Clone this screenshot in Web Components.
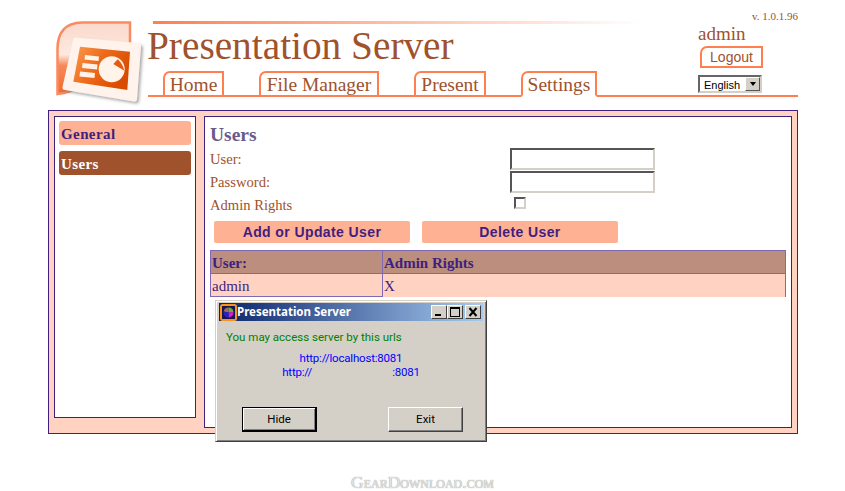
<!DOCTYPE html>
<html>
<head>
<meta charset="utf-8">
<title>Presentation Server</title>
<style>
html, body { margin: 0; padding: 0; background: #fff; overflow: hidden; }
body { font-family: "Liberation Serif", serif; color: #a0522d; height: 491px; position: relative; }
</style>
</head>
<body>

<ps-header user="admin" version="v. 1.0.1.96">
    <ps-tab style="width: 61px">Home</ps-tab>
    <ps-tab style="width: 120px">File Manager</ps-tab>
    <ps-tab style="width: 72px">Present</ps-tab>
    <ps-tab style="width: 76px" active>Settings</ps-tab>
</ps-header>

<ps-panel>
    <ps-nav-item slot="nav">General</ps-nav-item>
    <ps-nav-item slot="nav" active>Users</ps-nav-item>
    <ps-users></ps-users>
</ps-panel>

<ps-footer>GearDownload.com</ps-footer>

<ps-dialog title="Presentation Server"></ps-dialog>

<script>
class PsLogo extends HTMLElement {
    constructor() {
        super();
        this.attachShadow({ mode: 'open' });
        this.shadowRoot.innerHTML = /* html */`
        <style>
        :host { display: block; width: 92px; height: 88px; }
        svg { display: block; }
        </style>
        <svg width="92" height="88" viewBox="0 0 92 88">
            <defs>
                <linearGradient id="back" x1="0" y1="0" x2="0" y2="1">
                    <stop offset="0" stop-color="#fbd9cb"/>
                    <stop offset="0.45" stop-color="#fde9e0"/>
                    <stop offset="0.6" stop-color="#f58a58"/>
                    <stop offset="1" stop-color="#f26a2a"/>
                </linearGradient>
                <linearGradient id="slide" x1="0" y1="0" x2="1" y2="0.5">
                    <stop offset="0" stop-color="#fb9a4f"/>
                    <stop offset="0.5" stop-color="#ee6a1a"/>
                    <stop offset="1" stop-color="#d94c00"/>
                </linearGradient>
                <filter id="soft" x="-10%" y="-10%" width="125%" height="125%">
                    <feDropShadow dx="2" dy="2" stdDeviation="1.5" flood-color="#666" flood-opacity="0.55"/>
                </filter>
            </defs>
            <path d="M2.500 73 V28 Q2.500 2 27 1.500 H75 V52 L9 72 Z" fill="url(#back)" stroke="#fb8a60" stroke-width="2.500"/>
            <path d="M18 19 Q18 16 21 16.500 L83 22 Q86 22.500 86 25 L82 78 Q82 81 79 80.500 L10 69 Q7 68.500 7.500 66 Z" fill="#fff3ec" filter="url(#soft)"/>
            <path d="M25 25.700 L75 30.700 L72.300 69 L18.300 60.700 Z" fill="url(#slide)"/>
            <path d="M30 34 L44 35.500 L43.500 40 L29.500 38.500 Z M27.500 42 L42.500 43.500 L42 48.500 L27 47 Z M25 50.500 L40 52 L39.500 57 L24.500 55.500 Z" fill="#fff3ea"/>
            <circle cx="56.700" cy="48.300" r="13" fill="#fff3ea"/>
            <path d="M58.300 43 L62.700 38.300 Q68 43 69.300 49.700 Z" fill="#e85a10"/>
        </svg>`;
    }
}
customElements.define('ps-logo', PsLogo);

class PsTab extends HTMLElement {
    constructor() {
        super();
        this.attachShadow({ mode: 'open' });
        this.shadowRoot.innerHTML = /* html */`
        <style>
        :host {
            display: block;
            box-sizing: border-box;
            height: 26px;
            padding-top: 1px;
            border: 2px solid #ff7f50;
            border-top-left-radius: 7px;
            font-size: 19.500px;
            line-height: 21px;
            color: #a0522d;
            text-align: center;
            white-space: nowrap;
            background: #fff;
        }
        :host([active]) { border-bottom-color: #fff; }
        </style>
        <slot></slot>`;
    }
}
customElements.define('ps-tab', PsTab);

class PsSelect extends HTMLElement {
    constructor() {
        super();
        this.attachShadow({ mode: 'open' });
        this.shadowRoot.innerHTML = /* html */`
        <style>
        :host {
            display: flex;
            box-sizing: border-box;
            width: 64px;
            height: 18px;
            border: 2px solid;
            border-color: #666 #d4d0c8 #d4d0c8 #666;
            font: 11px "Liberation Sans", sans-serif;
            color: #000;
            background: #fff;
        }
        .value { flex: 1; padding-left: 4px; line-height: 16px; }
        .arrow {
            width: 15px;
            box-sizing: border-box;
            background: #d4d0c8;
            border: 1px solid;
            border-color: #fff #555 #555 #fff;
            display: flex;
            align-items: center;
            justify-content: center;
        }
        .arrow i { border: 3.500px solid transparent; border-top: 4px solid #000; border-bottom: 0; }
        </style>
        <span class="value">English</span>
        <span class="arrow"><i></i></span>`;
    }
}
customElements.define('ps-select', PsSelect);

class PsHeader extends HTMLElement {
    constructor() {
        super();
        this.attachShadow({ mode: 'open' });
        const user = this.getAttribute('user') || '';
        const version = this.getAttribute('version') || '';
        this.shadowRoot.innerHTML = /* html */`
        <style>
        :host {
            display: flex;
            box-sizing: border-box;
            width: 798px;
            height: 110px;
            padding: 21px 0 0 55px;
        }
        .main { margin-left: 1px; flex: 1; display: flex; flex-direction: column; }
        .top { display: flex; height: 50px; }
        .brand { flex: 1; }
        .rule {
            height: 3px;
            margin-left: 5px;
            width: 490px;
            background: linear-gradient(to right, #ff7f50, #fff);
        }
        h1 {
            margin: 0 0 0 -1px;
            font-weight: normal;
            font-size: 39.300px;
            line-height: 45px;
            color: #a0522d;
        }
        .account { width: 100px; margin-top: -11px; }
        .version { font-size: 11px; line-height: 13px; text-align: right; }
        .user { font-size: 19px; line-height: 20px; margin-top: 1px; }
        .logout {
            box-sizing: border-box;
            width: 63px;
            height: 22px;
            margin: 2px 0 0 2px;
            border: 2px solid #ff7f50;
            border-top-left-radius: 7px;
            font: 14px/18px "Liberation Sans", sans-serif;
            text-align: center;
        }
        .tabs {
            flex: 0 0 26px;
            display: flex;
            gap: 35px;
            box-sizing: border-box;
            height: 26px;
            padding-left: 15px;
            position: relative;
            background: linear-gradient(#ff7f50, #ff7f50) bottom / 100% 2px no-repeat;
        }
        ps-select { margin: 4px 36px 0 auto; }
        </style>
        <ps-logo></ps-logo>
        <div class="main">
            <div class="top">
                <div class="brand">
                    <div class="rule"></div>
                    <h1>Presentation Server</h1>
                </div>
                <div class="account">
                    <div class="version">${version}</div>
                    <div class="user">${user}</div>
                    <div class="logout">Logout</div>
                </div>
            </div>
            <div class="tabs">
                <slot></slot>
                <ps-select></ps-select>
            </div>
        </div>`;
    }
}
customElements.define('ps-header', PsHeader);

class PsNavItem extends HTMLElement {
    constructor() {
        super();
        this.attachShadow({ mode: 'open' });
        this.shadowRoot.innerHTML = /* html */`
        <style>
        :host {
            display: block;
            height: 24px;
            padding-left: 2px;
            border-radius: 3px;
            background: #ffb194;
            color: #3f1f7f;
            font-weight: bold;
            font-size: 15px;
            letter-spacing: 0.400px;
            line-height: 26px;
        }
        :host([active]) { background: #a0522d; color: #fff; }
        </style>
        <slot></slot>`;
    }
}
customElements.define('ps-nav-item', PsNavItem);

class PsPanel extends HTMLElement {
    constructor() {
        super();
        this.attachShadow({ mode: 'open' });
        this.shadowRoot.innerHTML = /* html */`
        <style>
        :host {
            display: flex;
            box-sizing: border-box;
            width: 750px;
            height: 324px;
            margin-left: 48px;
            padding: 5px;
            gap: 8px;
            background: #ffd2c2;
            border: 1px solid #3f1f7f;
        }
        nav {
            box-sizing: border-box;
            width: 142px;
            height: 302px;
            padding: 4px;
            display: flex;
            flex-direction: column;
            gap: 6px;
            background: #fff;
            border: 1px solid #3f1f7f;
        }
        main {
            flex: 1;
            box-sizing: border-box;
            padding: 5px;
            background: #fff;
            border: 1px solid #3f1f7f;
        }
        </style>
        <nav><slot name="nav"></slot></nav>
        <main><slot></slot></main>`;
    }
}
customElements.define('ps-panel', PsPanel);

class PsUsers extends HTMLElement {
    constructor() {
        super();
        this.attachShadow({ mode: 'open' });
        this.shadowRoot.innerHTML = /* html */`
        <style>
        :host { display: block; color: #a0522d; font-size: 14.600px; }
        h2 {
            margin: 0;
            height: 25px;
            font-size: 19.500px;
            line-height: 26px;
            color: #6a5a8c;
        }
        .form {
            display: grid;
            grid-template-columns: 300px 145px;
            grid-auto-rows: 23px;
            align-items: center;
            height: 69px;
        }
        label { padding-top: 2px; }
        input[type=text], input[type=password] {
            box-sizing: border-box;
            width: 145px;
            height: 22px;
            margin: 0;
            padding: 0;
            background: #fff;
            outline: 0;
            border: 2px solid;
            border-color: #555 #d4d0c8 #d4d0c8 #555;
        }
        .check {
            box-sizing: border-box;
            width: 12px;
            height: 12px;
            margin: -3px 0 0 4px;
            border: 2px solid;
            border-color: #555 #d4d0c8 #d4d0c8 #555;
        }
        .actions { display: flex; gap: 12px; padding: 5px 0 0 4px; height: 22px; }
        button {
            width: 196px;
            height: 22px;
            padding: 0;
            border: 0;
            border-radius: 2px;
            background: #ffb194;
            color: #3f1f7f;
            font: bold 14px "Liberation Sans", sans-serif;
            letter-spacing: 0.400px;
        }
        table {
            width: 576px;
            margin-top: 7px;
            border-collapse: separate;
            border-spacing: 0;
            table-layout: fixed;
            color: #3f1f7f;
        }
        th, td {
            box-sizing: border-box;
            height: 23px;
            padding: 2px 0 0 1px;
            text-align: left;
            font-size: 15px;
            border-left: 1px solid #7f68b4;
        }
        th {
            height: 24px;
            background: #bb8e7e;
            border-top: 1px solid #7f68b4;
            border-bottom: 1px solid #7f68b4;
        }
        td { background: #ffd2c2; font-weight: normal; }
        .first { width: 172px; }
        .last { border-right: 1px solid #7f68b4; }
        td.first { border-bottom: 1px solid #7f68b4; }
        </style>
        <h2>Users</h2>
        <div class="form">
            <label>User:</label><input type="text">
            <label>Password:</label><input type="password">
            <label>Admin Rights</label><div class="check"></div>
        </div>
        <div class="actions">
            <button>Add or Update User</button>
            <button>Delete User</button>
        </div>
        <table>
            <tr><th class="first">User:</th><th class="last">Admin Rights</th></tr>
            <tr><td class="first">admin</td><td class="last">X</td></tr>
        </table>`;
    }
}
customElements.define('ps-users', PsUsers);

class WinButton extends HTMLElement {
    constructor() {
        super();
        this.attachShadow({ mode: 'open' });
        this.shadowRoot.innerHTML = /* html */`
        <style>
        :host {
            display: block;
            box-sizing: border-box;
            width: 75px;
            height: 25px;
            background: #d4d0c8;
            border: 1px solid;
            border-color: #fff #404040 #404040 #fff;
            box-shadow: inset -1px -1px 0 #808080;
            font: 11.500px/22px Roboto, sans-serif;
            color: #000;
            text-align: center;
        }
        :host([default]) {
            border-color: #000;
            border-width: 1px 2px 2px 1px;
            box-shadow: inset 1px 1px 0 #fff, inset -1px -1px 0 #808080;
        }
        </style>
        <slot></slot>`;
    }
}
customElements.define('win-button', WinButton);

class PsDialog extends HTMLElement {
    constructor() {
        super();
        this.attachShadow({ mode: 'open' });
        const title = this.getAttribute('title') || '';
        this.shadowRoot.innerHTML = /* html */`
        <style>
        :host {
            position: absolute;
            left: 215px;
            top: 300px;
            box-sizing: border-box;
            width: 272px;
            height: 142px;
            display: flex;
            flex-direction: column;
            padding: 2px 3px 3px;
            background: #d4d0c8;
            border: 1px solid;
            border-color: #d4d0c8 #404040 #404040 #d4d0c8;
            box-shadow: inset 1px 1px 0 #fff, inset -1px -1px 0 #808080;
            font: 11.500px Roboto, sans-serif;
        }
        .bar {
            height: 18px;
            display: flex;
            align-items: center;
            padding: 0 2px 0 1px;
            background: linear-gradient(to right, #0a246a, #a6caf0);
            color: #fff;
        }
        .bar svg { display: block; }
        .bar .name {
            flex: 1;
            white-space: nowrap;
            font: bold 11.500px "Noto Sans", sans-serif;
            padding-bottom: 1px;
        }
        .ctl {
            box-sizing: border-box;
            width: 16px;
            height: 14px;
            background: #d4d0c8;
            border: 1px solid;
            border-color: #fff #404040 #404040 #fff;
            display: block;
        }
        .ctl svg { width: 14px; height: 12px; }
        .close { margin-left: 2px; }
        .green { color: #008000; margin: 9px 0 0 7px; line-height: 15px; }
        .urls { color: #0000ff; margin-top: 6px; line-height: 14px; text-align: center; letter-spacing: -0.200px; }
        .urls span { display: inline-block; width: 80px; }
        .buttons { margin-top: auto; display: flex; justify-content: space-between; padding: 0 20px 6px 23px; }
        </style>
        <div class="bar">
            <svg width="17" height="17" viewBox="0 0 17 17">
                <rect x="1" y="1" width="15" height="15" rx="1.500" fill="#1a1450" stroke="#f7941d" stroke-width="2"/>
                <path d="M8.500 8.500 L8.500 3.500 A5 5 0 0 0 3.600 7.500 Z" fill="#9a7050"/>
                <path d="M8.500 8.500 L8.500 3.500 A5 5 0 0 1 13.500 8 Z" fill="#6aa84f"/>
                <path d="M8.500 8.500 L13.500 8 A5 5 0 0 1 8.500 13.500 Z" fill="#d020d0"/>
                <path d="M8.500 8.500 L8.500 13.500 A5 5 0 0 1 3.600 7.500 Z" fill="#2a20c8"/>
            </svg>
            <span class="name">${title}</span>
            <span class="ctl"><svg viewBox="0 0 14 12"><rect x="3" y="8" width="6" height="2" fill="#000"/></svg></span>
            <span class="ctl"><svg viewBox="0 0 14 12"><path d="M2 1 H12 V11 H2 Z M3 3 V10 H11 V3 Z" fill="#000" fill-rule="evenodd"/></svg></span>
            <span class="ctl close"><svg viewBox="0 0 14 12"><path d="M3.500 2 L10.500 10 M10.500 2 L3.500 10" stroke="#000" stroke-width="2"/></svg></span>
        </div>
        <div class="green">You may access server by this urls</div>
        <div class="urls">
            http://localhost:8081<br>
            http://<span></span>:8081
        </div>
        <div class="buttons">
            <win-button default>Hide</win-button>
            <win-button>Exit</win-button>
        </div>`;
    }
}
customElements.define('ps-dialog', PsDialog);

class PsFooter extends HTMLElement {
    constructor() {
        super();
        this.attachShadow({ mode: 'open' });
        this.shadowRoot.innerHTML = /* html */`
        <style>
        :host {
            display: block;
            width: 845px;
            margin-top: 40px;
            text-align: center;
            font: 17.500px/17px "Liberation Serif", serif;
            font-variant: small-caps;
            color: #e4e4e4;
            text-shadow: 0 0 1px #777;
        }
        </style>
        <slot></slot>`;
    }
}
customElements.define('ps-footer', PsFooter);
</script>
</body>
</html>
